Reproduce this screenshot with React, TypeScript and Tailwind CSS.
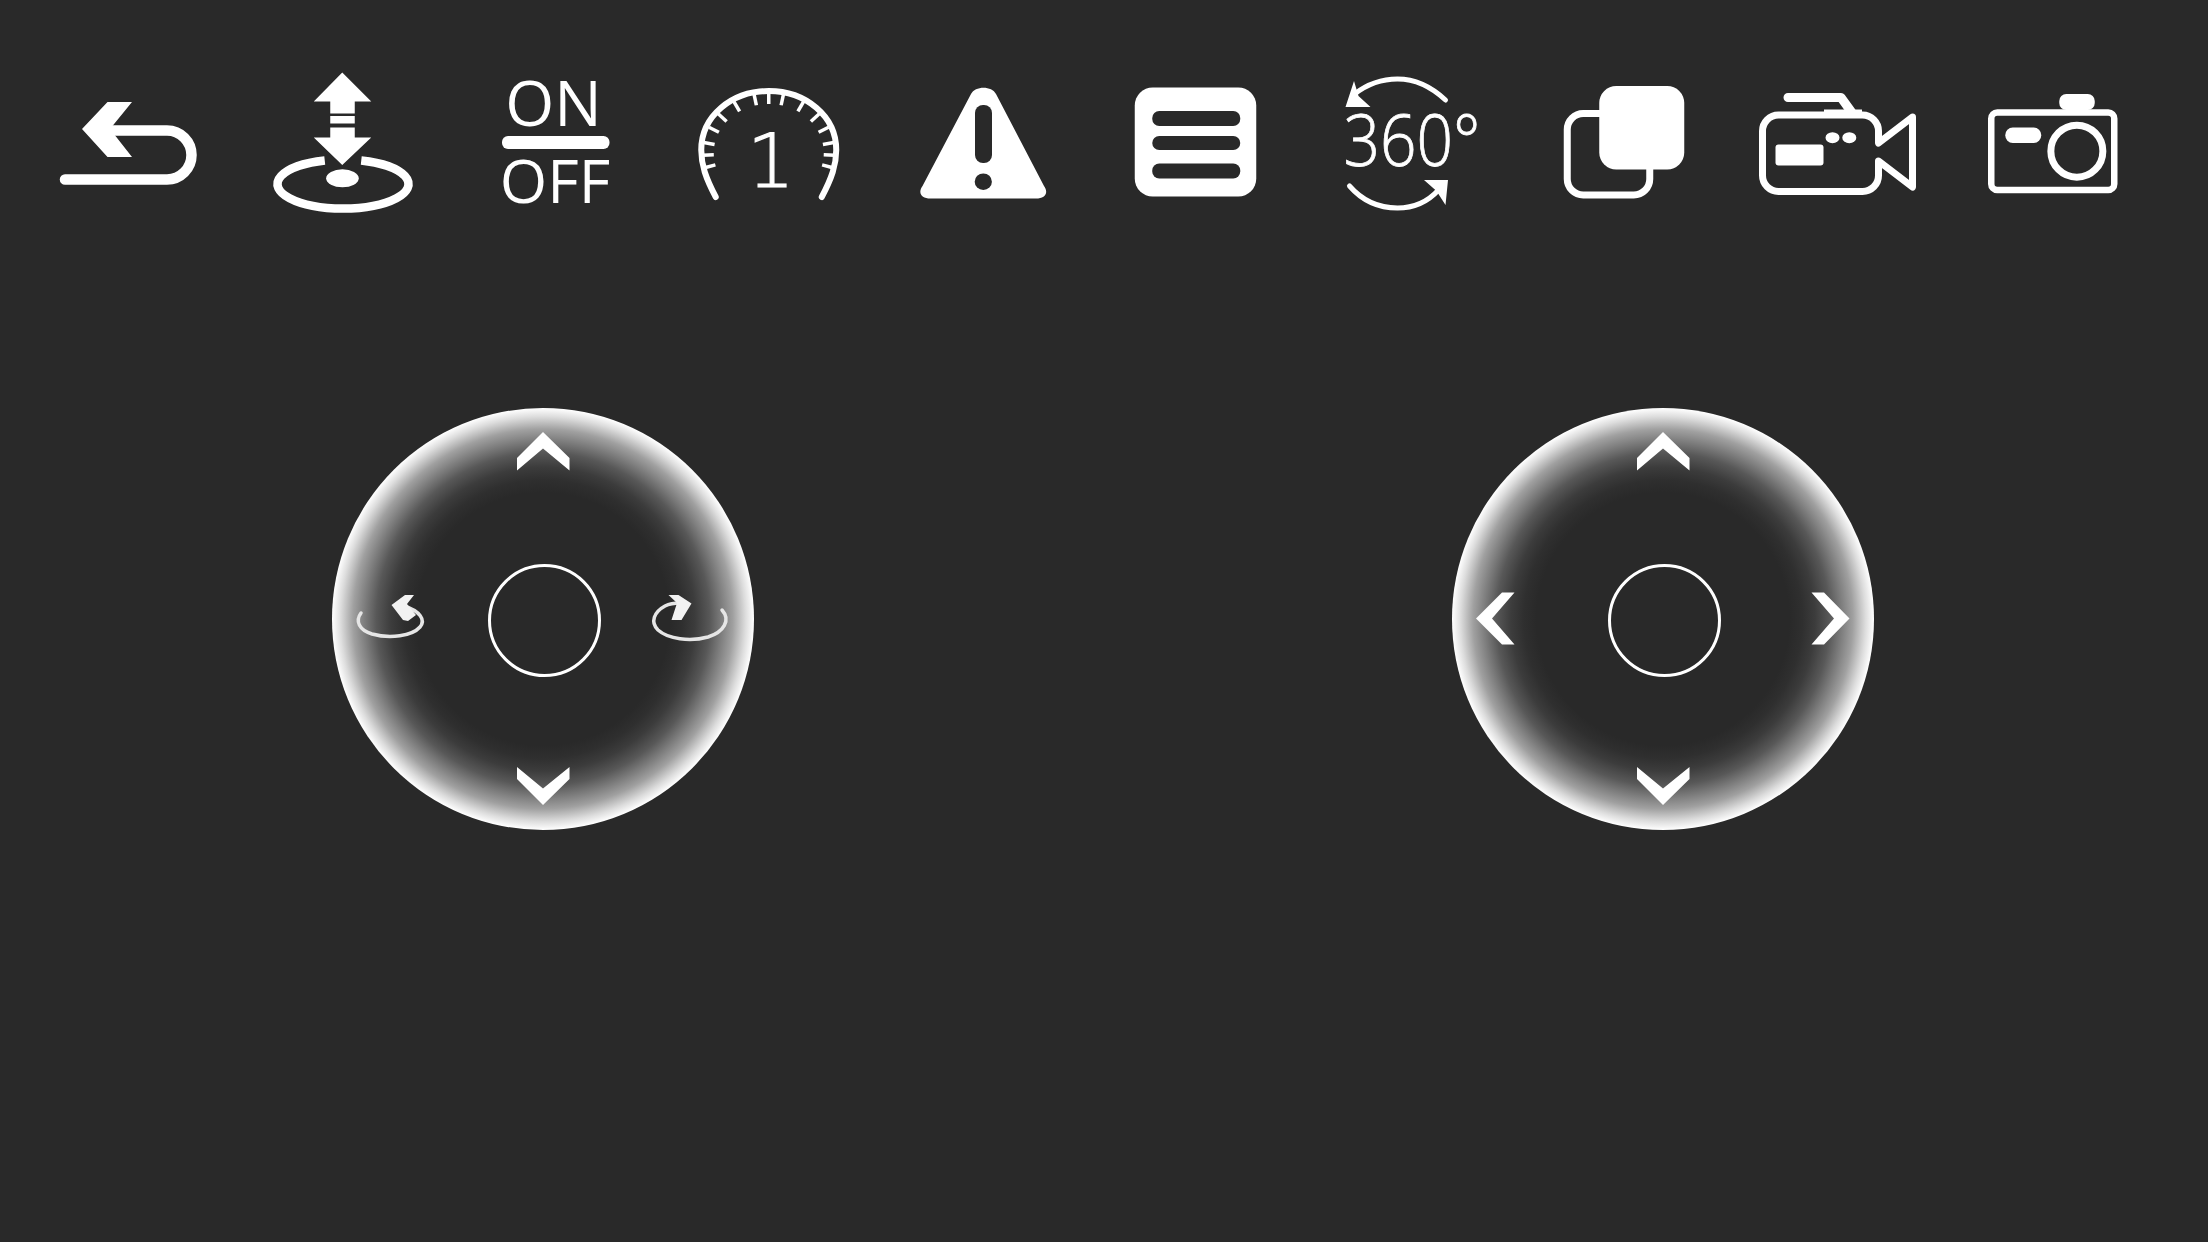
const BG = '#292929';

// each icon is drawn in page coordinates, the viewBox picks out its own cell
function Cell({ i, children }: { i: number; children: React.ReactNode }) {
  const x = 28 + 213.75 * i;
  return (
    <svg viewBox={`${x} 60 200 200`} className="h-[200px] w-[200px] shrink-0 blur-[0.5px]" fill="white">
      {children}
    </svg>
  );
}

const TICKS = [-104, -92, -80, -65, -50, -32, -13, 0, 13, 32, 50, 65, 80, 92, 104];

function BackIcon() {
  return (
    <Cell i={0}>
      <path d="M65,179.5 H167 A24.5,24.5 0 0 0 167,130.5 H105" fill="none" stroke="white" strokeWidth={10.5} strokeLinecap="round" />
      <polygon points="82,129 107.5,102 132,102 110,129 132,157 107.5,157" />
    </Cell>
  );
}

function LandingIcon() {
  return (
    <Cell i={1}>
      <polygon points="342,72.5 371,101.5 354.5,101.5 354.5,113.5 330,113.5 330,101.5 313.5,101.5" />
      <rect x={330} y={116} width={24.5} height={7.5} />
      <polygon points="330,127.5 354.5,127.5 354.5,137.5 371,137.5 342,165 313.5,137.5 330,137.5" />
      <path d="M361,160.5 A65.5,24.5 0 1 1 324.5,160.5" fill="none" stroke="white" strokeWidth={8.5} />
      <ellipse cx={342.2} cy={178.3} rx={16.3} ry={9} />
    </Cell>
  );
}

function OnOffIcon() {
  return (
    <Cell i={2}>
      <text x={553} y={126} textAnchor="middle" className="font-['Open_Sans'] text-[63px]">ON</text>
      <rect x={501.5} y={136} width={107.5} height={13} rx={6} />
      <text x={554.5} y={203} textAnchor="middle" className="font-['Open_Sans'] text-[61px]">OFF</text>
    </Cell>
  );
}

function SpeedIcon() {
  return (
    <Cell i={3}>
      <path
        d="M716,197 C706,178 701.5,165 701.5,150 C701.5,116 732,91 769,91 C806,91 836.5,116 836.5,150 C836.5,165 832,178 822,197"
        fill="none"
        stroke="white"
        strokeWidth={6}
        strokeLinecap="round"
      />
      {TICKS.map(t => {
        const a = (t * Math.PI) / 180;
        return (
          <line
            key={t}
            x1={769 + 66 * Math.sin(a)}
            y1={153 - 61 * Math.cos(a)}
            x2={769 + 55 * Math.sin(a)}
            y2={153 - 49 * Math.cos(a)}
            stroke="white"
            strokeWidth={3.5}
          />
        );
      })}
      <text x={771} y={186.5} textAnchor="middle" stroke="white" strokeWidth={1.2} className="font-['DejaVu_Sans'] text-[75px] font-extralight">1</text>
    </Cell>
  );
}

function WarningIcon() {
  return (
    <Cell i={4}>
      <path d="M971,94 C975,85.5 992,85.5 996,94 L1044,186 C1049,193 1045,198.5 1036,198.5 H930.5 C921.5,198.5 917.5,193 922.5,186 Z" />
      <rect x={975} y={105} width={17} height={58} rx={8} fill={BG} />
      <ellipse cx={983.3} cy={181.7} rx={8.6} ry={8.3} fill={BG} />
    </Cell>
  );
}

function MenuIcon() {
  return (
    <Cell i={5}>
      <rect x={1134.5} y={87.5} width={121.5} height={109} rx={18} />
      <rect x={1152} y={111} width={88} height={15} rx={7} fill={BG} />
      <rect x={1152} y={136} width={88} height={14} rx={7} fill={BG} />
      <rect x={1152} y={163.5} width={88} height={15} rx={7} fill={BG} />
    </Cell>
  );
}

function Rotate360Icon() {
  return (
    <Cell i={6}>
      <path d="M1445,100 C1430,86 1415,79 1397,79 C1380,79 1367,84 1354,94" fill="none" stroke="white" strokeWidth={5} strokeLinecap="round" />
      <polygon points="1353.5,81 1345,107 1370,107 1358,96" />
      <text x={1343} y={166} textLength={137} lengthAdjust="spacingAndGlyphs" stroke="white" strokeWidth={0.8} className="font-['Open_Sans'] text-[72px] font-light">360°</text>
      <path d="M1349,186 C1362,201 1378,208 1397,208 C1414,208 1428,201 1438,190" fill="none" stroke="white" strokeWidth={5} strokeLinecap="round" />
      <polygon points="1447.5,180 1423.5,180 1436,191 1445,205" />
    </Cell>
  );
}

function OverlapIcon() {
  return (
    <Cell i={7}>
      <rect x={1567.5} y={113.5} width={82.5} height={81.5} rx={16} fill="none" stroke="white" strokeWidth={7} />
      <rect x={1599.5} y={86} width={85} height={83.5} rx={17} />
    </Cell>
  );
}

function VideoIcon() {
  return (
    <Cell i={8}>
      <path
        d="M1878.5,143 V131 A16,16 0 0 0 1862.5,115 H1778.5 A16,16 0 0 0 1762.5,131 V175.5 A16,16 0 0 0 1778.5,191.5 H1862.5 A16,16 0 0 0 1878.5,175.5 V161 L1912.5,187 V117 Z"
        fill="none"
        stroke="white"
        strokeWidth={7}
        strokeLinejoin="round"
      />
      <path d="M1788,97.5 H1841 L1851.5,112" fill="none" stroke="white" strokeWidth={9} strokeLinecap="round" strokeLinejoin="round" />
      <rect x={1824} y={109.5} width={38} height={5} />
      <ellipse cx={1832.5} cy={137.7} rx={7} ry={5.5} />
      <ellipse cx={1849.3} cy={137.7} rx={7} ry={5.5} />
      <rect x={1775.5} y={144.5} width={48} height={21} rx={3} />
    </Cell>
  );
}

function CameraIcon() {
  return (
    <Cell i={9}>
      <rect x={1991} y={112.5} width={123} height={77.5} rx={6} fill="none" stroke="white" strokeWidth={6.5} />
      <rect x={2059} y={94} width={35.5} height={16} rx={7} />
      <rect x={2005} y={127.5} width={36} height={15.5} rx={7.5} />
      <circle cx={2076.6} cy={151.2} r={26} fill="none" stroke="white" strokeWidth={7} />
    </Cell>
  );
}

function Joystick({ rotate }: { rotate?: boolean }) {
  return (
    <div className="relative flex h-[422px] w-[422px] items-center justify-center rounded-full bg-[radial-gradient(circle_closest-side,#292929_60%,#2f2f2f_66%,#3c3c3c_72%,#585858_79%,#a0a0a0_90%,#dddddd_96%,#ffffff_100%)]">
      <div className="ml-[2px] mt-[2px] h-[113px] w-[113px] rounded-full border-[3px] border-white" />
      <svg viewBox="0 0 422 422" className="absolute inset-0 blur-[0.5px]" fill="white">
        <polygon points="211,24 237.5,50 237.5,62.5 211,40.5 185,62.5 185,50" />
        <polygon points="211,397 237.5,371 237.5,359 211,380.5 185,359 185,371" />
        {rotate ? (
          <>
            <path d="M29,205 C23,213 27,222 40,226 C58,231 80,228 88,219 C94,212 88,203 72,198" fill="none" stroke="#e6e6e6" strokeWidth={3.5} strokeLinecap="round" />
            <polygon points="59.5,197 73,187 82,187 75,196 84,207 76,213 71,212" fill="#f2f2f2" />
            <path d="M390,202 C399,212 392,224 376,229 C358,234 336,231 326,222 C318,214 322,204 333,198 C338,195.5 342,195 348,195" fill="none" stroke="#e6e6e6" strokeWidth={3.5} strokeLinecap="round" />
            <polygon points="359.5,195.5 346.5,187 336.5,187 345,195 339.5,212 349.5,212" fill="#f2f2f2" />
          </>
        ) : (
          <>
            <polygon points="24,210.5 50,184.5 62.5,184.5 40,210.5 62.5,236.5 50,236.5" />
            <polygon points="397.5,210.5 372,184.5 359.5,184.5 382,210.5 359.5,236.5 372,236.5" />
          </>
        )}
      </svg>
    </div>
  );
}

export default function App() {
  return (
    <div className="h-[1242px] w-[2208px] overflow-hidden bg-[#292929]">
      <div className="flex gap-[13.75px] pl-[28px] pt-[60px]">
        <BackIcon />
        <LandingIcon />
        <OnOffIcon />
        <SpeedIcon />
        <WarningIcon />
        <MenuIcon />
        <Rotate360Icon />
        <OverlapIcon />
        <VideoIcon />
        <CameraIcon />
      </div>
      <div className="mt-[148px] flex gap-[698px] pl-[332px]">
        <Joystick rotate />
        <Joystick />
      </div>
    </div>
  );
}
